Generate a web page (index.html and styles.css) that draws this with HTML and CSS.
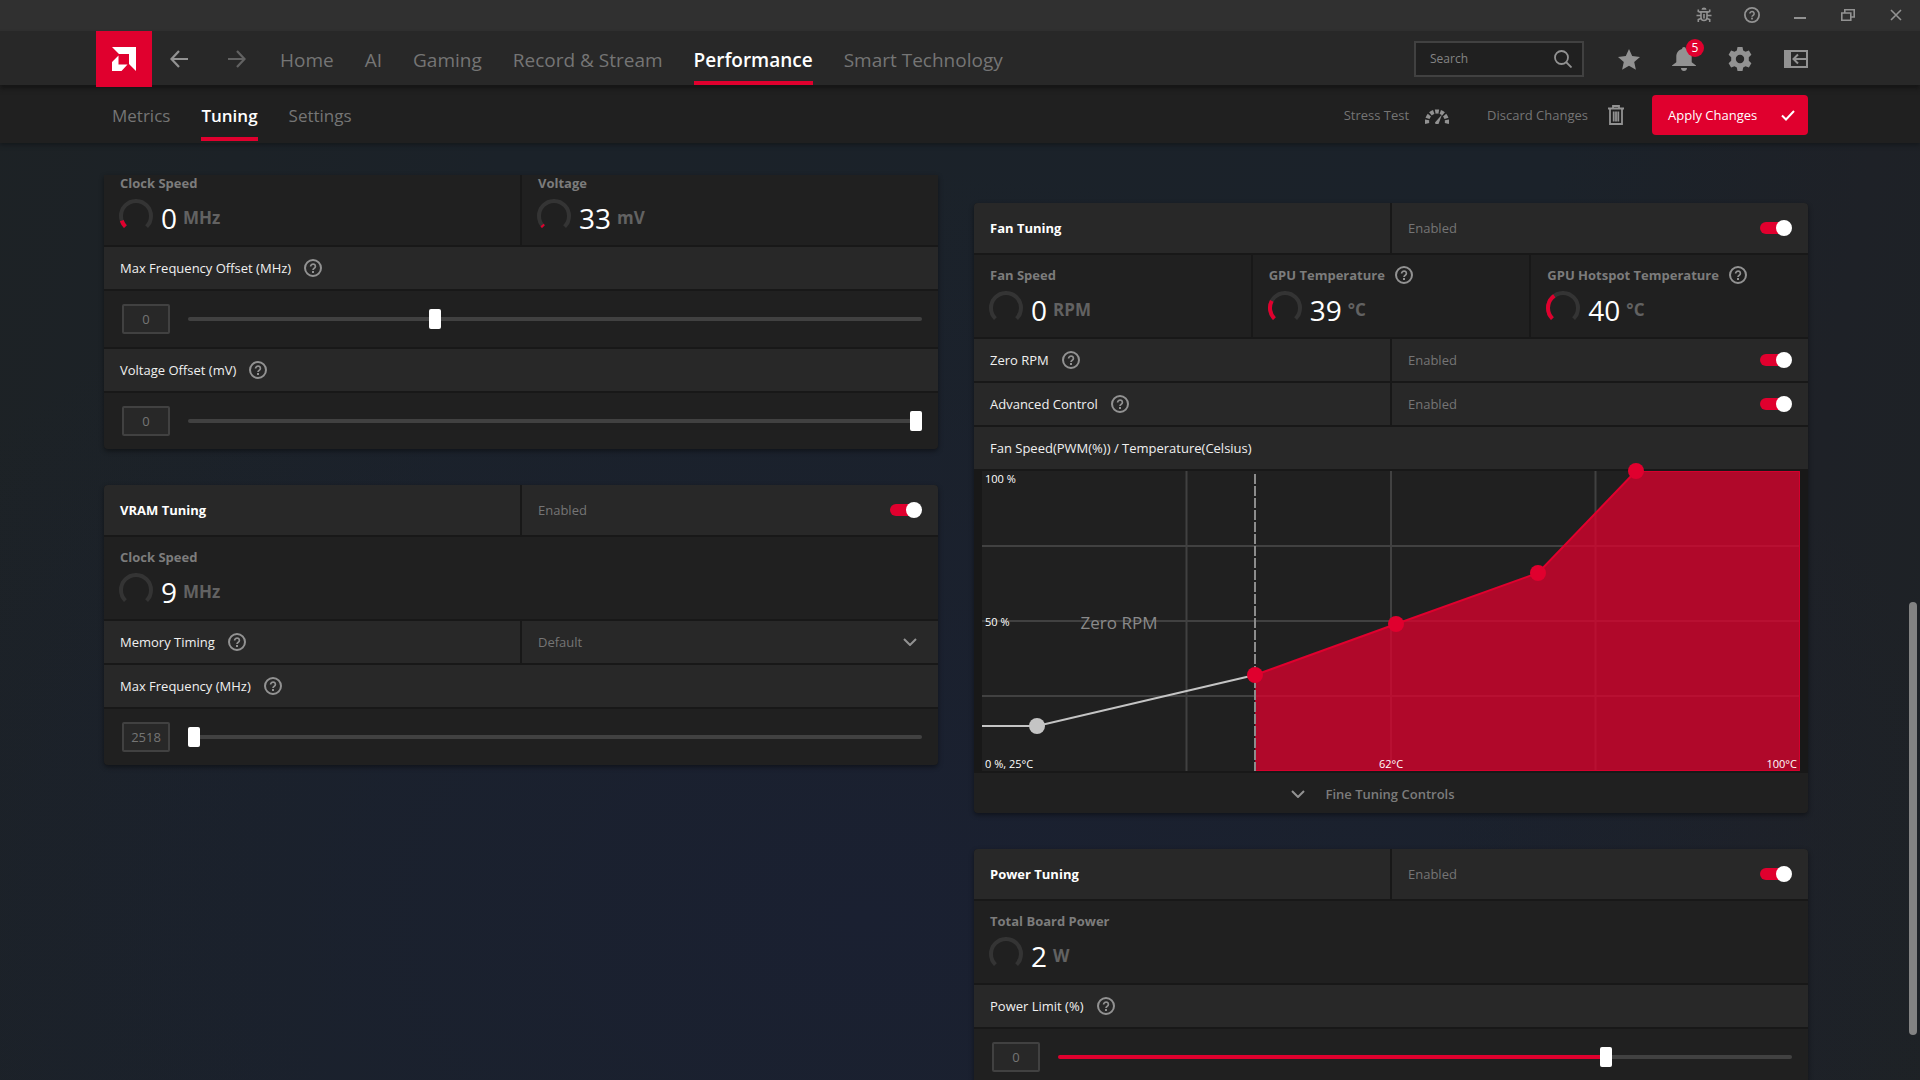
FILE: index.html
```html
<!DOCTYPE html>
<html lang="en">
<head>
<meta charset="utf-8">
<title>Performance Tuning</title>
<link rel="stylesheet" href="styles.css">
</head>
<body>
<svg class="defs" aria-hidden="true">
  <symbol id="help" viewBox="0 0 18 18">
    <circle cx="9" cy="9" r="8" fill="none" stroke="currentColor" stroke-width="2"/>
    <path d="M6.6 7.4a2.4 2.3 0 1 1 3.7 1.9c-.9.6-1.3.9-1.3 1.7" fill="none" stroke="currentColor" stroke-width="1.7"/>
    <rect x="8" y="12" width="2" height="2" fill="currentColor"/>
  </symbol>
  <symbol id="chevron" viewBox="0 0 14 8">
    <path d="M1 1l6 6 6-6" fill="none" stroke="currentColor" stroke-width="2"/>
  </symbol>
</svg>

<div class="titlebar">
  <button class="icon-btn" aria-label="Report a bug">
    <svg width="16" height="16" viewBox="0 0 16 16" fill="none" stroke="currentColor" stroke-width="1.6"><path d="M5 4.900h6v5.600a3 3 0 0 1-6 0zM.5 8.500H5M11 8.500h4.500M5 5.500 2.300 4.500V2.500M11 5.500l2.700-1V2.500M5 11.500 2.300 12.500V15M11 11.500l2.700 1V15M8 7v4.500"/><path d="M5.500 2.800a2.500 2.200 0 0 1 5 0z" fill="currentColor" stroke="none"/></svg>
  </button>
  <button class="icon-btn" aria-label="Help"><svg width="16" height="16"><use href="#help"/></svg></button>
  <button class="icon-btn" aria-label="Minimize"><svg width="12" height="12" viewBox="0 0 12 12"><path d="M0 8h12v2H0z" fill="currentColor"/></svg></button>
  <button class="icon-btn" aria-label="Restore"><svg width="14" height="12" viewBox="0 0 14 12" fill="none" stroke="currentColor" stroke-width="1.600"><path d="M.8 4h9v7.200h-9zM3.800 4V.8h9.400v7.200H10"/></svg></button>
  <button class="icon-btn" aria-label="Close"><svg width="12" height="12" viewBox="0 0 12 12"><path d="M1 1l10 10M11 1 1 11" stroke="currentColor" stroke-width="1.600"/></svg></button>
</div>

<header class="topnav">
  <a class="logo" href="#" aria-label="Home page">
    <svg width="24" height="24" viewBox="0 0 24 24" fill="#fff"><path d="M0 0h24v24l-7-7V7H7z"/><path d="M6.500 8.500V17.500H15.500L9.500 24H0V15z"/></svg>
  </a>
  <div class="history">
    <button class="icon-btn back" aria-label="Back"><svg width="18" height="18" viewBox="0 0 18 18" fill="none" stroke="currentColor" stroke-width="2.200"><path d="M18 9H1.500M9 1 1.500 9 9 17"/></svg></button>
    <button class="icon-btn forward" aria-label="Forward"><svg width="18" height="18" viewBox="0 0 18 18" fill="none" stroke="currentColor" stroke-width="2.200"><path d="M0 9h16.500M9 1l7.500 8L9 17"/></svg></button>
  </div>
  <nav class="tabs">
    <a href="#">Home</a>
    <a href="#">AI</a>
    <a href="#">Gaming</a>
    <a href="#">Record &amp; Stream</a>
    <a href="#" class="active">Performance</a>
    <a href="#">Smart Technology</a>
  </nav>
  <div class="tools">
    <label class="search">
      <input type="text" placeholder="Search" aria-label="Search">
      <svg width="18" height="18" viewBox="0 0 18 18" fill="none" stroke="currentColor" stroke-width="1.800"><circle cx="7.500" cy="7.500" r="6.500"/><path d="M12 12l5.500 5.500"/></svg>
    </label>
    <button class="icon-btn" aria-label="Favorites"><svg width="22" height="21" viewBox="0 0 22 21"><path d="M11 0l3.200 7.100 7.800.8-5.800 5.200 1.700 7.700L11 16.800l-6.900 4 1.700-7.700L0 7.900l7.800-.8z" fill="currentColor"/></svg></button>
    <button class="icon-btn bell" aria-label="Notifications"><svg width="24" height="24" viewBox="0 0 24 24" fill="currentColor"><path d="M12 0a2 2 0 0 1 2 1.900c3.500.9 5.700 3.800 5.700 7.600v5.800L24 18.500V19H0v-.500l4.300-3.200V9.500C4.300 5.700 6.500 2.800 10 1.900A2 2 0 0 1 12 0zM9 21h6c0 1.700-1.300 3-3 3s-3-1.300-3-3z"/></svg><span class="badge">5</span></button>
    <button class="icon-btn" aria-label="Preferences"><svg width="24" height="24" viewBox="0 0 24 24"><path fill="currentColor" fill-rule="evenodd" d="M9.500 0h5l.7 3.400 2.300 1.300 3.400-1.100 2.500 4.200-2.600 2.400v3.600l2.600 2.400-2.500 4.200-3.400-1.100-2.300 1.300-.7 3.400h-5l-.7-3.400-2.300-1.300-3.400 1.100L.6 16.200l2.600-2.400v-3.600L.6 7.800l2.500-4.200 3.400 1.100 2.300-1.300zM12 7.800a4.200 4.200 0 1 0 0 8.400 4.200 4.200 0 0 0 0-8.400z"/></svg></button>
    <button class="icon-btn" aria-label="Toggle side panel"><svg width="24" height="18" viewBox="0 0 24 18" fill="none" stroke="currentColor" stroke-width="2"><path d="M0 0h7v18H0z" fill="currentColor" stroke="none"/><path d="M1 1h22v16H1zM23 9H9.500M14 4.500 9.500 9l4.500 4.500"/></svg></button>
  </div>
</header>

<div class="subnav">
  <nav class="tabs tabs-small">
    <a href="#">Metrics</a>
    <a href="#" class="active">Tuning</a>
    <a href="#">Settings</a>
  </nav>
  <div class="actions">
    <button class="action">Stress Test
      <svg width="24" height="17" viewBox="0 0 24 17"><path d="M2.200 16.500A10 10 0 1 1 21.800 16.500" fill="none" stroke="currentColor" stroke-width="4.200" pathLength="100" stroke-dasharray="10.600 4.300"/><path d="M10 15.500l7-8-3.500 9.500h-3z" fill="currentColor"/></svg>
    </button>
    <button class="action">Discard Changes
      <svg width="16" height="20" viewBox="0 0 16 20" fill="none" stroke="currentColor" stroke-width="1.800"><path d="M2 4v15h12V4M0 3.500h16M5 3V1h6v2M5.700 6.500v10M8 6.500v10M10.300 6.500v10"/></svg>
    </button>
    <button class="apply">Apply Changes
      <svg width="14" height="11" viewBox="0 0 14 11"><path d="M1 5.500l4 4L13 1" fill="none" stroke="#fff" stroke-width="2"/></svg>
    </button>
  </div>
</div>

<main class="view">
  <div class="column">
    <section class="card card-continued">
      <div class="metrics metrics-2">
        <div class="metric">
          <div class="metric-name">Clock Speed</div>
          <div class="reading"><svg class="gauge" viewBox="0 0 34 34"><path d="M6.400 27.600A15 15 0 1 1 27.600 27.600"/><path class="level" pathLength="100" stroke-dasharray="10 200" d="M6.400 27.600A15 15 0 1 1 27.600 27.600"/></svg><span class="value">0</span><span class="unit">MHz</span></div>
        </div>
        <div class="metric">
          <div class="metric-name">Voltage</div>
          <div class="reading"><svg class="gauge" viewBox="0 0 34 34"><path d="M6.400 27.600A15 15 0 1 1 27.600 27.600"/><path class="level" pathLength="100" stroke-dasharray="3 200" d="M6.400 27.600A15 15 0 1 1 27.600 27.600"/></svg><span class="value">33</span><span class="unit">mV</span></div>
        </div>
      </div>
      <div class="row"><div class="cell"><label for="freq-offset">Max Frequency Offset (MHz)</label><svg class="help"><use href="#help"/></svg></div></div>
      <div class="slider-row"><input class="number" type="text" value="0" aria-label="Frequency offset value"><input class="slider" id="freq-offset" type="range" min="0" max="300" value="100"></div>
      <div class="row"><div class="cell"><label for="volt-offset">Voltage Offset (mV)</label><svg class="help"><use href="#help"/></svg></div></div>
      <div class="slider-row"><input class="number" type="text" value="0" aria-label="Voltage offset value"><input class="slider" id="volt-offset" type="range" min="-200" max="0" value="0"></div>
    </section>

    <section class="card">
      <div class="row row-head split"><div class="cell"><h2>VRAM Tuning</h2></div><div class="cell muted"><label for="vram">Enabled</label><input class="toggle" id="vram" type="checkbox" checked></div></div>
      <div class="metrics">
        <div class="metric">
          <div class="metric-name">Clock Speed</div>
          <div class="reading"><svg class="gauge" viewBox="0 0 34 34"><path d="M6.400 27.600A15 15 0 1 1 27.600 27.600"/></svg><span class="value">9</span><span class="unit">MHz</span></div>
        </div>
      </div>
      <div class="row split">
        <div class="cell"><label for="timing">Memory Timing</label><svg class="help"><use href="#help"/></svg></div>
        <div class="cell cell-select muted"><select id="timing"><option>Default</option></select><svg class="chevron"><use href="#chevron"/></svg></div>
      </div>
      <div class="row"><div class="cell"><label for="vram-freq">Max Frequency (MHz)</label><svg class="help"><use href="#help"/></svg></div></div>
      <div class="slider-row"><input class="number" type="text" value="2518" aria-label="Memory frequency value"><input class="slider" id="vram-freq" type="range" min="2518" max="3000" value="2518"></div>
    </section>
  </div>

  <div class="column column-lower">
    <section class="card">
      <div class="row row-head split"><div class="cell"><h2>Fan Tuning</h2></div><div class="cell muted"><label for="fan">Enabled</label><input class="toggle" id="fan" type="checkbox" checked></div></div>
      <div class="metrics metrics-3">
        <div class="metric">
          <div class="metric-name">Fan Speed</div>
          <div class="reading"><svg class="gauge" viewBox="0 0 34 34"><path d="M6.400 27.600A15 15 0 1 1 27.600 27.600"/></svg><span class="value">0</span><span class="unit">RPM</span></div>
        </div>
        <div class="metric">
          <div class="metric-name">GPU Temperature<svg class="help"><use href="#help"/></svg></div>
          <div class="reading"><svg class="gauge" viewBox="0 0 34 34"><path d="M6.400 27.600A15 15 0 1 1 27.600 27.600"/><path class="level" pathLength="100" stroke-dasharray="27 200" d="M6.400 27.600A15 15 0 1 1 27.600 27.600"/></svg><span class="value">39</span><span class="unit">°C</span></div>
        </div>
        <div class="metric">
          <div class="metric-name">GPU Hotspot Temperature<svg class="help"><use href="#help"/></svg></div>
          <div class="reading"><svg class="gauge" viewBox="0 0 34 34"><path d="M6.400 27.600A15 15 0 1 1 27.600 27.600"/><path class="level" pathLength="100" stroke-dasharray="37 200" d="M6.400 27.600A15 15 0 1 1 27.600 27.600"/></svg><span class="value">40</span><span class="unit">°C</span></div>
        </div>
      </div>
      <div class="row split"><div class="cell">Zero RPM<svg class="help"><use href="#help"/></svg></div><div class="cell muted"><label for="zero-rpm">Enabled</label><input class="toggle" id="zero-rpm" type="checkbox" checked></div></div>
      <div class="row split"><div class="cell">Advanced Control<svg class="help"><use href="#help"/></svg></div><div class="cell muted"><label for="advanced">Enabled</label><input class="toggle" id="advanced" type="checkbox" checked></div></div>
      <div class="row"><div class="cell">Fan Speed(PWM(%)) / Temperature(Celsius)</div></div>
      <div class="chart">
        <svg viewBox="0 0 818 300" role="img" aria-label="Fan curve">
          <rect width="818" height="300" fill="#202020"/>
          <path d="M204.500 0v300M409 0v300M613.500 0v300M0 75h818M0 150h818M0 225h818" stroke="#414141" stroke-width="2"/>
          <path d="M273 204L414 153 556 102 654 0H818V300H273z" fill="#e0002e" fill-opacity=".75"/>
          <path d="M273 3V300" stroke="#8c8c8c" stroke-width="2" stroke-dasharray="10 2"/>
          <path d="M274 299.500H817.500V.5H654" fill="none" stroke="#d5002c"/>
          <path d="M273 204L414 153 556 102 654 0" fill="none" stroke="#e0002e" stroke-width="2"/>
          <path d="M0 255H55L273 204" fill="none" stroke="#c4c4c4" stroke-width="2"/>
          <circle cx="55" cy="255" r="8" fill="#c4c4c4"/>
          <g fill="#e0002e"><circle cx="273" cy="204" r="8"/><circle cx="414" cy="153" r="8"/><circle cx="556" cy="102" r="8"/><circle cx="654" cy="0" r="8"/></g>
          <text class="zone" x="137" y="158" text-anchor="middle">Zero RPM</text>
          <g class="axis">
            <text x="3" y="12">100 %</text>
            <text x="3" y="155">50 %</text>
            <text x="3" y="297">0 %, 25°C</text>
            <text x="409" y="297" text-anchor="middle">62°C</text>
            <text x="815" y="297" text-anchor="end">100°C</text>
          </g>
        </svg>
      </div>
      <button class="expand"><svg class="chevron"><use href="#chevron"/></svg>Fine Tuning Controls</button>
    </section>

    <section class="card">
      <div class="row row-head split"><div class="cell"><h2>Power Tuning</h2></div><div class="cell muted"><label for="power">Enabled</label><input class="toggle" id="power" type="checkbox" checked></div></div>
      <div class="metrics">
        <div class="metric">
          <div class="metric-name">Total Board Power</div>
          <div class="reading"><svg class="gauge" viewBox="0 0 34 34"><path d="M6.400 27.600A15 15 0 1 1 27.600 27.600"/></svg><span class="value">2</span><span class="unit">W</span></div>
        </div>
      </div>
      <div class="row"><div class="cell"><label for="power-limit">Power Limit (%)</label><svg class="help"><use href="#help"/></svg></div></div>
      <div class="slider-row"><input class="number" type="text" value="0" aria-label="Power limit value"><input class="slider slider-filled" id="power-limit" type="range" min="-30" max="10" value="0"></div>
    </section>
  </div>
  <div class="scrollbar"></div>
</main>
</body>
</html>
```
FILE: styles.css
```css
:root {
  --red: #e0002e;
  --panel: #202020;
  --row: #282828;
  --gap: #181818;
  --muted: #757575;
  --icon: #929292;
}

* { box-sizing: border-box; }

body {
  margin: 0;
  height: 100vh;
  display: flex;
  flex-direction: column;
  overflow: hidden;
  font: 13px/20px "Open Sans", "Noto Sans", sans-serif;
  color: #f0f0f0;
  background:
    radial-gradient(ellipse 60% 70% at 45% 85%, #1a2031, rgba(26, 32, 49, 0)),
    linear-gradient(100deg, #1d2225 0%, #1b2229 25%, #1b222a 75%, #1e2127 90%, #1e2225 100%);
}

button, input, select { font: inherit; color: inherit; }
button { border: 0; padding: 0; background: none; }
a { color: inherit; text-decoration: none; }
svg { display: block; flex: none; }
.defs { position: absolute; width: 0; height: 0; }

.titlebar {
  flex: none;
  height: 31px;
  display: flex;
  justify-content: flex-end;
  align-items: flex-start;
  background: #303030;
}
.icon-btn { display: flex; align-items: center; justify-content: center; color: var(--icon); }
.titlebar .icon-btn { width: 48px; height: 30px; }

.topnav {
  flex: none;
  height: 54px;
  display: flex;
  padding: 0 112px 0 96px;
  background: var(--row);
  position: relative;
  z-index: 2;
  box-shadow: 0 4px 4px #161616;
}
.logo {
  width: 56px;
  height: 56px;
  display: flex;
  align-items: center;
  justify-content: center;
  background: var(--red);
}
.history { display: flex; align-items: center; gap: 40px; margin: 2px 34px 0 18px; }
.history .forward { color: #626262; }

.tabs { display: flex; gap: 31px; font-size: 19px; color: var(--muted); }
.tabs a { display: flex; align-items: center; padding-top: 8px; border-bottom: 4px solid transparent; }
.tabs .active { color: #fff; font-weight: 600; border-bottom-color: var(--red); }

.tools { margin-left: auto; padding-top: 2px; display: flex; align-items: center; gap: 32px; }
.search {
  width: 170px;
  height: 36px;
  margin-right: 2px;
  padding: 0 10px 0 14px;
  display: flex;
  align-items: center;
  border: 2px solid #414141;
  background: var(--panel);
  color: var(--icon);
}
.search input { flex: 1; min-width: 0; padding: 0; border: 0; background: none; font-size: 12px; }
.search input::placeholder { color: #848484; opacity: 1; }
.bell { position: relative; }
.badge {
  position: absolute;
  top: -8px;
  right: -8px;
  width: 18px;
  height: 18px;
  border-radius: 9px;
  background: var(--red);
  color: #fff;
  font-size: 12px;
  line-height: 18px;
}

.subnav {
  flex: none;
  height: 58px;
  display: flex;
  padding: 0 112px;
  background: var(--panel);
  position: relative;
  z-index: 1;
  box-shadow: 0 2px 4px #14181b;
}
.tabs-small { font-size: 17px; margin-bottom: 2px; }
.tabs-small a { padding-top: 10px; }
.actions { margin-left: auto; display: flex; align-items: center; padding-top: 2px; }
.action { display: flex; align-items: center; color: var(--muted); gap: 16px; margin-right: 38px; }
.action + .action { margin-right: 28px; gap: 20px; }
.action svg { color: var(--icon); }
.apply {
  width: 156px;
  height: 40px;
  padding: 0 13px 0 16px;
  display: flex;
  align-items: center;
  justify-content: space-between;
  border-radius: 4px;
  background: var(--red);
  color: #fff;
}

.view {
  flex: 1;
  min-height: 0;
  margin-top: 32px;
  padding: 0 112px 0 104px;
  display: flex;
  align-items: flex-start;
  gap: 36px;
  position: relative;
}
.column { flex: 1; min-width: 0; display: flex; flex-direction: column; gap: 36px; }
.column-lower { padding-top: 28px; }

.card {
  display: flex;
  flex-direction: column;
  gap: 2px;
  border-radius: 4px;
  background: var(--gap);
  box-shadow: 0 2px 5px rgba(0, 0, 0, .45);
}
.row-head > :first-child { border-top-left-radius: 4px; }
.row-head > :last-child { border-top-right-radius: 4px; }
.card > :last-child { border-radius: 0 0 4px 4px; }
.card-continued { border-radius: 0 0 4px 4px; }

.row { display: grid; gap: 2px; min-height: 42px; }
.row-head { min-height: 50px; }
.split { grid-template-columns: 1fr 1fr; }
.cell {
  display: flex;
  align-items: center;
  gap: 13px;
  padding: 0 16px;
  background: var(--row);
}
.cell-select { padding-right: 21px; }
h2 { margin: 0; font-size: 13px; line-height: 20px; font-weight: 700; color: #fff; }
.muted { color: var(--muted); justify-content: space-between; }
.help { width: 18px; height: 18px; color: var(--icon); }
.chevron { width: 14px; height: 8px; color: var(--icon); }

.metrics { display: grid; gap: 2px; }
.metrics-2 { grid-template-columns: 1fr 1fr; }
.metrics-3 { grid-template-columns: 1fr 1fr 1fr; }
.metric { height: 82px; padding: 10px 16px 0; background: var(--panel); }
.card-continued .metric { height: 70px; padding-top: 0; }
.card-continued .metric-name { height: 18px; line-height: 16px; align-items: flex-start; }
.metric-name { height: 20px; display: flex; align-items: center; gap: 10px; font-weight: 700; color: #7c7c7c; }
.reading { display: flex; align-items: center; height: 46px; }
.gauge { width: 34px; height: 34px; margin-left: -1px; fill: none; stroke: #343434; stroke-width: 4; }
.gauge .level { stroke: var(--red); }
.value { margin: 3px 6px 0 8px; font-size: 28px; line-height: 36px; color: #fff; }
.unit { margin-top: 3px; font-size: 17px; font-weight: 700; color: #626262; }

.slider-row {
  height: 56px;
  padding: 0 16px 0 18px;
  display: flex;
  align-items: center;
  gap: 18px;
  background: var(--panel);
}
.number {
  width: 48px;
  height: 30px;
  padding: 0;
  border: 2px solid #414141;
  border-radius: 2px;
  background: var(--row);
  color: var(--muted);
  text-align: center;
}
.slider { flex: 1; min-width: 0; height: 20px; margin: 0; appearance: none; background: none; }
.slider::-webkit-slider-runnable-track { height: 4px; border-radius: 2px; background: #414141; }
.slider::-webkit-slider-thumb { appearance: none; width: 12px; height: 20px; margin-top: -8px; border-radius: 2px; background: #fff; }
.slider-filled::-webkit-slider-runnable-track { background: linear-gradient(to right, var(--red) 75%, #414141 75%); }

.toggle {
  appearance: none;
  position: relative;
  width: 32px;
  height: 16px;
  margin: 0;
}
.toggle::before {
  content: "";
  position: absolute;
  inset: 2px 4px 2px 0;
  border-radius: 6px;
  background: var(--red);
}
.toggle::after {
  content: "";
  position: absolute;
  top: 0;
  right: 0;
  width: 16px;
  height: 16px;
  border-radius: 50%;
  background: #fff;
}

select { flex: 1; appearance: none; border: 0; padding: 0; background: none; }

.chart { padding: 0 8px; }
.chart svg { width: 100%; height: auto; overflow: visible; }
.chart text { fill: #fff; }
.chart .axis { font-size: 11px; }
.chart .zone { font-size: 17px; fill: #8a8a8a; }

.expand {
  height: 40px;
  padding: 2px 36px 0 0;
  display: flex;
  align-items: center;
  justify-content: center;
  gap: 20px;
  background: var(--panel);
  color: #7c7c7c;
  font-weight: 600;
}

.scrollbar {
  position: absolute;
  top: 427px;
  right: 3px;
  width: 8px;
  height: 433px;
  border-radius: 4px;
  background: #838383;
}
```
